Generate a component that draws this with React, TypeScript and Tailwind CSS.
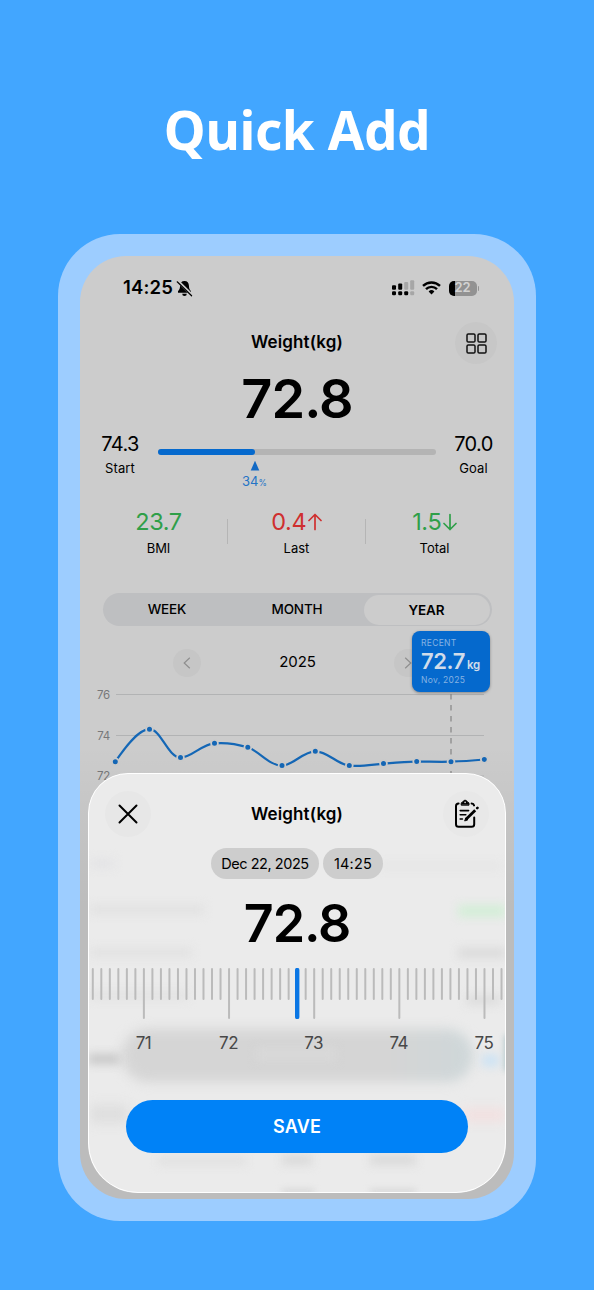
import type { ReactNode } from 'react'

const points = [
    [115.3, 761.7], [149.5, 729.2], [180.5, 757.6], [214.5, 743.3], [247.8, 747.3], [282, 765.6],
    [315.3, 751.3], [349.3, 765.6], [383.5, 763.6], [416.7, 761.6], [451, 761.7], [484.3, 759.5],
]

const line = 'M115.3 761.7 C124 749 138 729.2 149.5 729.2 C161 729.2 168 757.6 180.5 757.6 C192 757.6 202 743.8 214.5 743.3 C225 742.4 237 744 247.8 747.3 C260 751.5 269 765.6 282 765.6 C293 765.6 303 751.3 315.3 751.3 C328 751.3 337 764.5 349.3 765.6 C361 767 372 764.6 383.5 763.6 C395 762.6 405 761.6 416.7 761.6 C428 761.6 440 762 451 761.7 C462 761.3 473 760.5 484.3 759.5'

const StatusBar = () => (
    <div className="flex h-16 items-center pl-[43px] pr-[35px]">
        <span className="w-[50px] whitespace-nowrap text-[18.5px] font-semibold tracking-[0.15px]">14:25</span>
        <svg className="ml-[3px] h-[17px] w-[17px]" viewBox="0 0 17 17">
            <path d="M8.5 1C5.6 1 4.2 3 4.1 5.6C4 8.6 3.4 9.8 2 11.3V12.8H15V11.3C13.6 9.8 13 8.6 12.9 5.6C12.8 3 11.4 1 8.5 1Z M6.2 13.8A2.3 2.2 0 0 0 10.8 13.8Z" fill="#000" />
            <path d="M2.2 1.6L16 15" stroke="#ccc" strokeWidth="3" />
            <path d="M1.2 1.8L15.6 15.8" stroke="#000" strokeWidth="1.2" strokeLinecap="round" />
        </svg>
        <svg className="ml-auto h-4 w-[23px]" viewBox="0 0 23 16">
            <g fill="#000">
                <rect x="0" y="5.2" width="4" height="4.6" rx="1" />
                <rect x="6.2" y="3.6" width="4" height="6.2" rx="1" />
                <rect x="0" y="11.2" width="4" height="4" rx="1.2" />
                <rect x="6.2" y="11.2" width="4" height="4" rx="1.2" />
                <rect x="12.2" y="11.2" width="4" height="4" rx="1.2" />
            </g>
            <g fill="#a6a6a6">
                <rect x="12.2" y="2" width="4" height="7.8" rx="1" />
                <rect x="18.2" y="0.2" width="4" height="9.6" rx="1" />
                <rect x="18.2" y="11.2" width="4" height="4" rx="1.2" />
            </g>
        </svg>
        <svg className="ml-[7px] h-[14px] w-[19px]" viewBox="0 0 19 14" fill="none" stroke="#000" strokeWidth="2.4">
            <path d="M1 4.9A12.2 12.2 0 0 1 18 4.9" />
            <path d="M4 8.1A7.8 7.8 0 0 1 15 8.1" />
            <path d="M9.5 13.4L6.6 10.5A4.1 4.1 0 0 1 12.4 10.5Z" fill="#000" stroke="none" />
        </svg>
        <div className="ml-[8px] flex h-[15px] w-[28px] items-center justify-center overflow-hidden rounded-[5px] bg-linear-to-r from-black from-[22%] to-[#929292] to-[22%] text-[13px] font-semibold text-[#d2d2d2]">22</div>
        <div className="ml-[1px] h-[5px] w-[1.5px] rounded-r bg-[#929292]"></div>
    </div>
)

const Stat = ({ label, color, children }: { label: string, color: string, children: ReactNode }) => (
    <div className="w-[137px] text-center">
        <div className={`flex h-7 items-center justify-center text-[23.5px] tracking-[-0.4px] ${color}`}>{children}</div>
        <div className="h-6 text-[13px] leading-6">{label}</div>
    </div>
)

const Arrow = ({ down }: { down?: boolean }) => (
    <svg className={`ml-[1.5px] h-[18px] w-[14px] ${down ? `rotate-180` : ``}`} viewBox="0 0 14 18" fill="none" stroke="currentColor" strokeWidth="1.7" strokeLinecap="round" strokeLinejoin="round">
        <path d="M7 16.5V1.5M1 7.5L7 1.5L13 7.5" />
    </svg>
)

const Chart = () => (
    <div className="relative h-[120px]">
        <svg className="h-[120px] w-[434px]" viewBox="80 677 434 120" fill="none">
            <path d="M116 694.5H484M116 735.5H484M116 776H484" stroke="#b2b3b4" />
            <path d="M451 694V790" stroke="#8f8f8f" strokeWidth="1.4" strokeDasharray="5.5 5.5" />
            <path d={line} stroke="#1467b6" strokeWidth="2.2" />
            {points.map(([x, y]) => (
                <circle key={x} cx={x} cy={y} r="3.4" fill="#1467b6" stroke="#cbcbcb" strokeWidth="1.8" />
            ))}
        </svg>
        <div className="absolute left-[12px] top-[10px] flex w-[18px] flex-col gap-[24.7px] text-right text-[11.5px] leading-4 tracking-[-0.2px] text-[#77787a]">
            <span>76</span>
            <span>74</span>
            <span>72</span>
        </div>
    </div>
)

const Ruler = () => (
    <svg className="block h-[51px] w-[418px]" viewBox="88 968 418 51" strokeLinecap="round">
        {Array.from({ length: 49 }, (_, i) => {
            const x = 92.8 + i * 8.515
            return <path key={i} d={i % 10 == 6 ? `M${x} 969V1018` : `M${x} 969V999`} stroke="#bbbbbb" strokeWidth="2" />
        })}
        <path d="M297.2 970V1017" stroke="#0a76e4" strokeWidth="4.4" />
    </svg>
)

// soft shapes of the page that shine through the sheet
const Ghosts = () => (
    <div className="absolute inset-0">
        <div className="absolute left-[34px] top-[256px] h-[53px] w-[351px] rounded-full bg-linear-to-r from-[#d5d5d5] from-75% to-[#ced7d9] blur-[6px]"></div>
        <div className="absolute left-[168px] top-[275px] h-[12px] w-[80px] bg-[#d9d9d9] blur-[5px]"></div>
        <div className="absolute left-[0px] top-[281px] h-[10px] w-[32px] bg-[#c6c6c6] blur-[5px]"></div>
        <div className="absolute left-[394px] top-[281px] h-[13px] w-[17px] bg-[#cfe3f3] blur-[4px]"></div>
        <div className="absolute left-[417px] top-[262px] h-[36px] w-[8px] bg-[#a9c1c6] blur-[3px]"></div>
        <div className="absolute left-[2px] top-[132px] h-[9px] w-[114px] bg-[#e1e1e1] blur-[5px]"></div>
        <div className="absolute left-[2px] top-[175px] h-[9px] w-[102px] bg-[#e1e1e1] blur-[5px]"></div>
        <div className="absolute left-[2px] top-[218px] h-[9px] w-[98px] bg-[#e2e2e2] blur-[5px]"></div>
        <div className="absolute left-[370px] top-[132px] h-[12px] w-[48px] bg-[#d3eed7] blur-[5px]"></div>
        <div className="absolute left-[370px] top-[175px] h-[10px] w-[48px] bg-[#dadada] blur-[5px]"></div>
        <div className="absolute left-[378px] top-[222px] h-[10px] w-[34px] bg-[#dcdcdc] blur-[5px]"></div>
        <div className="absolute left-[2px] top-[86px] h-[9px] w-[24px] bg-[#e3e3e5] blur-[5px]"></div>
        <div className="absolute left-[290px] top-[90px] h-[6px] w-[124px] bg-[#e5e5e5] blur-[5px]"></div>
        <div className="absolute left-[2px] top-[332px] h-[18px] w-[38px] bg-[#dedede] blur-[6px]"></div>
        <div className="absolute left-[374px] top-[336px] h-[12px] w-[44px] bg-[#f3dfdf] blur-[6px]"></div>
        <div className="absolute left-[70px] top-[384px] h-[8px] w-[88px] bg-[#e0e0e0] blur-[5px]"></div>
        <div className="absolute left-[194px] top-[382px] h-[10px] w-[30px] bg-[#d9d9d9] blur-[5px]"></div>
        <div className="absolute left-[282px] top-[382px] h-[10px] w-[46px] bg-[#d9d9d9] blur-[5px]"></div>
        <div className="absolute left-[194px] top-[416px] h-[6px] w-[32px] bg-[#d8d8d8] blur-[3px]"></div>
        <div className="absolute left-[282px] top-[416px] h-[6px] w-[46px] bg-[#d8d8d8] blur-[3px]"></div>
    </div>
)

const Sheet = () => (
    <div className="absolute left-[8px] top-[517px] h-[420px] w-[418px] overflow-hidden rounded-t-[40px] rounded-b-[50px] bg-[#ebebeb]">
        <Ghosts />
        <div className="relative">
            <div className="flex h-[64px] items-end justify-between px-[17px]">
                <button className="flex h-[46px] w-[46px] items-center justify-center rounded-full bg-[#e7e7e7]">
                    <svg className="h-[20px] w-[20px]" viewBox="0 0 20 20" stroke="#000" strokeWidth="2" strokeLinecap="round">
                        <path d="M1.5 1.5L18.5 18.5M18.5 1.5L1.5 18.5" />
                    </svg>
                </button>
                <h2 className="text-[17px] font-semibold leading-[46px] tracking-[0.12px]">Weight(kg)</h2>
                <button className="flex h-[46px] w-[46px] items-center justify-center rounded-full bg-[#e8e8e8]">
                    <svg className="h-[30px] w-[26px]" viewBox="0 0 26 30" fill="none" stroke="#000" strokeWidth="2" strokeLinecap="round" strokeLinejoin="round">
                        <path d="M5.6 4.6C4 4.6 3 5.6 3 7.2V25.2C3 26.8 4 27.8 5.6 27.8H18.6C20.2 27.8 21.2 26.8 21.2 25.2V18.6M18.6 4.6C19.9 4.6 20.8 5.2 21.1 6.4" />
                        <path d="M8.2 5.8V4.5C8.2 3.6 8.8 3.2 9.7 3.2C10.2 1.9 11 1.3 12.1 1.3C13.2 1.3 14 1.9 14.5 3.2C15.4 3.2 16 3.6 16 4.5V5.8Z" fill="#000" strokeWidth="1" />
                        <path d="M7.2 11.6H15.6M7.2 15.8H12.8M7.2 20H9.4" strokeWidth="1.6" />
                        <path d="M12.8 20.6L22.2 11.2" strokeWidth="2.8" strokeLinecap="butt" />
                        <path d="M24.2 9.1L24.5 8.8" strokeWidth="2.6" />
                        <path d="M11.8 21.6L12.8 18.9L14.5 20.6Z" fill="#000" strokeWidth="1" />
                        <circle cx="12.1" cy="3.4" r="0.8" fill="#ebebeb" stroke="none" />
                    </svg>
                </button>
            </div>
            <div className="mt-[11px] flex h-[31px] justify-center gap-[4px] leading-[31px]">
                <span className="w-[108px] rounded-full bg-[#cdcdcd] text-center text-[14.5px] tracking-[-0.45px]">Dec 22, 2025</span>
                <span className="w-[60px] rounded-full bg-[#cdcdcd] text-center text-[14.5px] tracking-[0.2px]">14:25</span>
            </div>
            <div className="mt-[15px] h-[60px] text-center text-[52px] font-semibold leading-[60px] tracking-[-1.1px]">72.8</div>
            <div className="mt-[14px]">
                <Ruler />
            </div>
            <div className="ml-[13.5px] mt-[12px] flex h-6 text-center text-[17px] leading-6 tracking-[-0.5px] text-[#484848]">
                {[71, 72, 73, 74, 75].map((n) => (
                    <span key={n} className="mr-[1.1px] w-[84px] shrink-0">{n}</span>
                ))}
            </div>
            <button className="mx-auto mt-[45px] block h-[53px] w-[342px] rounded-full bg-[#0082f7] text-[18px] font-semibold tracking-[0.2px] text-white">SAVE</button>
        </div>
        <div className="absolute inset-0 rounded-t-[40px] rounded-b-[50px] border-[1.5px] border-white"></div>
    </div>
)

const App = () => {
    return (
        <main className="flex h-[1290px] w-[594px] flex-col items-center bg-[#42a6ff] font-['Inter',sans-serif] text-black">
            <h1 className="mt-[90px] h-[80px] font-['Noto_Sans',sans-serif] text-[53px] font-bold leading-[80px] tracking-[-0.4px] text-white">Quick Add</h1>
            <div className="mt-[64px] h-[987px] w-[478px] rounded-[62px] bg-[#9dcdff] p-[22px]">
                <div className="relative h-[943px] w-[434px] overflow-hidden rounded-[46px] bg-[#cccccc]">
                    <StatusBar />
                    <div className="flex h-[46px] items-center justify-end pr-[17px]">
                        <h2 className="mr-[112px] text-[17px] font-semibold tracking-[0.12px]">Weight(kg)</h2>
                        <button className="flex h-[42px] w-[42px] items-center justify-center rounded-full bg-[#c7c7c7]">
                            <svg className="h-[21px] w-[21px]" viewBox="0 0 21 21" fill="none" stroke="#111" strokeWidth="1.5">
                                <rect x="1" y="1" width="8" height="8" rx="1.3" />
                                <rect x="12" y="1" width="8" height="8" rx="1.3" />
                                <rect x="1" y="12" width="8" height="8" rx="1.3" />
                                <rect x="12" y="12" width="8" height="8" rx="1.3" />
                            </svg>
                        </button>
                    </div>
                    <div className="h-[66px] text-center text-[54px] font-semibold leading-[66px] tracking-[-0.9px]">72.8</div>
                    <div className="flex h-16 text-center">
                        <div className="w-[80px]">
                            <div className="h-6 text-[20px] leading-6 tracking-[-0.6px]">74.3</div>
                            <div className="h-6 text-[13px] leading-6 tracking-[0.1px]">Start</div>
                        </div>
                        <div className="ml-[-2.5px] w-[278px] pt-[17px]">
                            <div className="h-[6px] rounded-full bg-[#b4b4b4]">
                                <div className="h-[6px] w-[97px] rounded-full bg-[#0569cd]"></div>
                            </div>
                            <div className="ml-[77px] mt-[5px] w-10 text-[13px] leading-[18px] text-[#2474c6]">
                                <svg className="mx-auto block h-[11px] w-[10px]" viewBox="0 0 10 11">
                                    <path d="M5 0.8L9.3 10.6H0.7Z" fill="#1269c4" />
                                </svg>
                                <div className="mt-[1px]">34<span className="text-[8.5px]">%</span></div>
                            </div>
                        </div>
                        <div className="w-[76px]">
                            <div className="h-6 text-[20px] leading-6 tracking-[-0.6px]">70.0</div>
                            <div className="h-6 text-[13px] leading-6 tracking-[0.1px]">Goal</div>
                        </div>
                    </div>
                    <div className="ml-[10px] flex h-[97px] pt-[12px]">
                        <Stat label="BMI" color="text-[#2f9f49]">23.7</Stat>
                        <div className="mt-[11px] h-[25px] w-px bg-[#b5b5b5]"></div>
                        <Stat label="Last" color="text-[#cf2f2f]">0.4<Arrow /></Stat>
                        <div className="mt-[11px] h-[25px] w-px bg-[#b5b5b5]"></div>
                        <Stat label="Total" color="text-[#2f9f49]">1.5<Arrow down /></Stat>
                    </div>
                    <div className="ml-[22.5px] flex h-[33px] w-[389px] items-center rounded-full bg-[#bebfc1] text-center text-[13.5px] font-medium tracking-[-0.15px]">
                        <span className="w-[129px]">WEEK</span>
                        <span className="w-[131px]">MONTH</span>
                        <span className="ml-[1px] h-[30px] w-[126px] rounded-full bg-[#cccccc] font-semibold leading-[30px]">YEAR</span>
                    </div>
                    <div className="ml-[93px] mt-[22px] flex h-[29px] w-[249px] items-center justify-between">
                        <span className="flex h-7 w-7 items-center justify-center rounded-full bg-[#c6c6c6]">
                            <svg className="h-3 w-2" viewBox="0 0 8 12" fill="none" stroke="#8f8f8f" strokeWidth="1.2"><path d="M6.8 0.8L1.2 6L6.8 11.2" /></svg>
                        </span>
                        <span className="text-[15px] tracking-[-0.1px]">2025</span>
                        <span className="flex h-7 w-7 items-center justify-center rounded-full bg-[#c6c6c6]">
                            <svg className="h-3 w-2" viewBox="0 0 8 12" fill="none" stroke="#8f8f8f" strokeWidth="1.2"><path d="M1.2 0.8L6.8 6L1.2 11.2" /></svg>
                        </span>
                    </div>
                    <Chart />
                    <div className="absolute left-[332px] top-[375px] h-[61px] w-[78px] rounded-[8px] bg-[#0569cd] pl-[9px] pt-[6px] text-[#d0dcea] shadow-[0_1px_3px_rgba(0,0,0,0.35)]">
                        <div className="text-[8.5px] leading-[12px] tracking-[0.3px] text-[#86b3e3]">RECENT</div>
                        <div className="flex h-[25px] items-baseline text-[22px] font-semibold leading-[25px] tracking-[-0.4px]">72.7<span className="ml-[2px] text-[11.5px]">kg</span></div>
                        <div className="text-[8.5px] leading-[12px] tracking-[0.3px] text-[#86b3e3]">Nov, 2025</div>
                    </div>
                    <div className="absolute left-0 top-[490px] h-[453px] w-full bg-linear-to-b from-transparent to-[#00000014] to-[35%]"></div>
                    <Sheet />
                </div>
            </div>
        </main>
    )
}

export default App
